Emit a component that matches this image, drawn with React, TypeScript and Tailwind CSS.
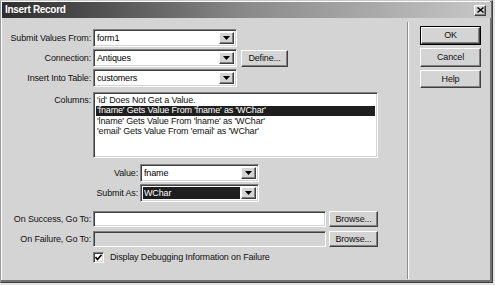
import * as React from 'react';

const font = { fontFamily: '"Liberation Sans", Arial, sans-serif' };

const sunken =
  'border border-t-[#808080] border-l-[#808080] border-b-white border-r-white shadow-[inset_1px_1px_0_#404040,inset_-1px_-1px_0_#d4d4d4]';
const raised =
  'border border-t-white border-l-white border-b-[#404040] border-r-[#404040] shadow-[inset_-1px_-1px_0_#808080]';

const Arrow = () => (
  <div className={`w-[15px] h-full flex items-center justify-center bg-[#d4d4d4] ${raised}`}>
    <svg width="7" height="4" viewBox="0 0 7 4">
      <polygon points="0,0 7,0 3.5,4" fill="#000" />
    </svg>
  </div>
);

interface DropdownProps {
  value: string;
  width: string;
  dark?: boolean;
}

const Dropdown = ({ value, width, dark }: DropdownProps) => (
  <div className={`${width} h-[18px] flex p-[2px] bg-white ${sunken}`}>
    <div
      className={`flex-1 flex items-center pl-[1px] mr-[1px] ${
        dark ? 'bg-[#1e1e1e] text-white' : 'text-black'
      }`}
    >
      {value}
    </div>
    <Arrow />
  </div>
);

const Button = ({ label, className }: { label: string; className: string }) => (
  <div className={`flex items-center justify-center bg-[#d4d4d4] ${raised} ${className}`}>
    {label}
  </div>
);

const Label = ({ text, width }: { text: string; width: string }) => (
  <span className={`${width} text-right mr-[2px] shrink-0`}>{text}</span>
);

const columns = [
  "'id' Does Not Get a Value.",
  "'fname' Gets Value From 'fname' as 'WChar'",
  "'lname' Gets Value From 'lname' as 'WChar'",
  "'email' Gets Value From 'email' as 'WChar'",
];

export default function App() {
  return (
    <div
      className="w-[495px] h-[285px] bg-[#e4e4e4] text-[9px] tracking-[-0.15px] text-[#111] leading-none"
      style={font}
    >
      <div className="w-[493px] h-[283px] flex flex-col bg-[#d4d4d4] border border-t-[#c8c8c8] border-l-[#9a9a9a] border-b-[#404040] border-r-[#404040] shadow-[inset_-2px_-2px_0_#707070,inset_1px_1px_0_#ffffff]">
        {/* title bar */}
        <div className="mx-[1px] mt-[1px] h-[16px] shrink-0 flex items-center justify-between bg-linear-to-r from-[#2e2e2e] via-[#8a8a8a] to-[#c8c8c8] pl-[3px] pr-[5px]">
          <span className="text-white font-bold text-[10px] tracking-[-0.3px]">Insert Record</span>
          <div className={`w-[12px] h-[11px] flex items-center justify-center bg-[#d4d4d4] ${raised}`}>
            <svg width="7" height="6" viewBox="0 0 7 6">
              <path d="M0.5 0.5 L6.5 5.5 M6.5 0.5 L0.5 5.5" stroke="#000" strokeWidth="1.4" />
            </svg>
          </div>
        </div>

        <div className="flex flex-1">
          {/* form */}
          <div className="w-[406px] flex flex-col pt-[11px] pl-[1px]">
            <div className="flex items-center">
              <Label text="Submit Values From:" width="w-[89px]" />
              <Dropdown value="form1" width="w-[144px]" />
            </div>
            <div className="flex items-center mt-[2px]">
              <Label text="Connection:" width="w-[89px]" />
              <Dropdown value="Antiques" width="w-[144px]" />
              <Button label="Define..." className="ml-[4px] w-[47px] h-[17px]" />
            </div>
            <div className="flex items-center mt-[2px]">
              <Label text="Insert Into Table:" width="w-[89px]" />
              <Dropdown value="customers" width="w-[144px]" />
            </div>
            <div className="flex items-start mt-[5px]">
              <span className="w-[89px] text-right mr-[2px] shrink-0 mt-[4px]">Columns:</span>
              <div className={`w-[285px] h-[66px] bg-white p-[2px] ${sunken}`}>
                {columns.map((c, i) => (
                  <div
                    key={c}
                    className={`h-[10.5px] flex items-center pl-[1px] ${
                      i === 1 ? 'bg-[#1e1e1e] text-white' : ''
                    }`}
                  >
                    {c}
                  </div>
                ))}
              </div>
            </div>
            <div className="flex items-center mt-[6px]">
              <Label text="Value:" width="w-[136px]" />
              <Dropdown value="fname" width="w-[119px]" />
            </div>
            <div className="flex items-center mt-[2px]">
              <Label text="Submit As:" width="w-[136px]" />
              <Dropdown value="WChar" width="w-[119px]" dark />
            </div>
            <div className="flex items-center mt-[9px]">
              <Label text="On Success, Go To:" width="w-[89px]" />
              <div className={`w-[233px] h-[16px] bg-white ${sunken}`} />
              <Button label="Browse..." className="ml-[3px] w-[49px] h-[16px]" />
            </div>
            <div className="flex items-center mt-[4px]">
              <Label text="On Failure, Go To:" width="w-[89px]" />
              <div className={`w-[233px] h-[16px] bg-[#d4d4d4] ${sunken}`} />
              <Button label="Browse..." className="ml-[3px] w-[49px] h-[16px]" />
            </div>
            <div className="flex items-center mt-[5px] pl-[91px]">
              <div className={`w-[11px] h-[11px] bg-white flex items-center justify-center ${sunken}`}>
                <svg width="7" height="7" viewBox="0 0 7 7">
                  <path d="M0.5 3 L2.5 5.5 L6.5 0.8" stroke="#000" strokeWidth="1.6" fill="none" />
                </svg>
              </div>
              <span className="ml-[6px]">Display Debugging Information on Failure</span>
            </div>
          </div>

          {/* separator */}
          <div className="w-[2px] mt-[4px] mb-[3px] border-l border-l-[#909090] border-r border-r-white" />

          {/* buttons */}
          <div className="flex flex-col pt-[8px] pl-[11px]">
            <div className="w-[61px] h-[19px] border border-black">
              <Button label="OK" className="w-full h-full" />
            </div>
            <Button label="Cancel" className="mt-[3px] w-[61px] h-[19px]" />
            <Button label="Help" className="mt-[3px] w-[61px] h-[18px]" />
          </div>
        </div>
      </div>
    </div>
  );
}
